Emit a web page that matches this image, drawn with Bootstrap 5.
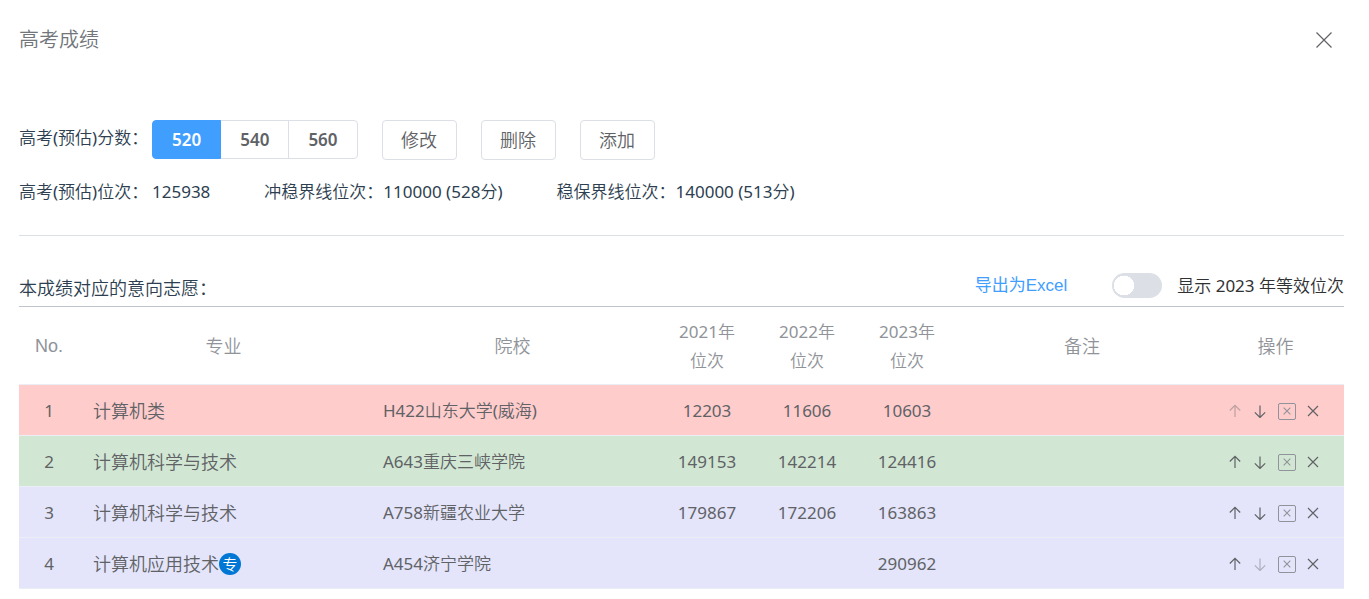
<!DOCTYPE html>
<html lang="zh-CN">
<head>
<meta charset="utf-8">
<meta name="viewport" content="width=device-width, initial-scale=1">
<title>高考成绩</title>
<link href="https://cdn.jsdelivr.net/npm/bootstrap@5.3.0/dist/css/bootstrap.min.css" rel="stylesheet">
<style>
  :root { --ink: #2c3e50; --text: #606266; --muted: #909399; --edge: #dcdfe6; --blue: #409eff; }
  body { font-family: "Noto Sans", "Noto Sans CJK SC DemiLight", "Noto Sans CJK SC", sans-serif; font-size: 17px; line-height: 26px; color: var(--ink); }
  .drawer { padding: 24px 25px 10px 19px; }
  .drawer-title { font-size: 20px; line-height: 32px; color: #72767b; font-weight: 350; }
  .icon-btn { display: inline-flex; align-items: center; justify-content: center; padding: 0; border: 0; background: none; color: var(--text); }
  .icon-btn:disabled { opacity: .4; }
  .icon-btn svg, .boxed svg { fill: none; stroke: currentColor; stroke-width: 1.2; display: block; }
  .score-row { margin-top: 64px; gap: 24px; }
  .row-label { width: 133px; white-space: nowrap; }
  .score-row .row-label { line-height: 36px; }
  .btn { --bs-btn-font-size: 18px; --bs-btn-font-weight: 350; --bs-btn-line-height: 26px; --bs-btn-padding-x: 18px; --bs-btn-padding-y: 6px; --bs-btn-border-radius: 4px;
         --bs-btn-color: var(--text); --bs-btn-bg: #fff; --bs-btn-border-color: var(--edge);
         --bs-btn-active-bg: var(--blue); --bs-btn-active-border-color: var(--blue); --bs-btn-active-color: #fff;
         --bs-btn-hover-color: var(--blue); --bs-btn-hover-border-color: var(--blue); min-width: 75px; }
  .score-group .btn { font-size: 17px; font-weight: 600; height: 39px; padding: 6px 19px; min-width: 0; }
  .rank-row { margin-top: 19px; gap: 54px; }
  .divider { margin: 30px 0 0; border-top: 1px solid var(--edge); opacity: 1; }
  .list-bar { padding: 32px 0 3px; border-bottom: 1px solid #c0c4cc; height: 71px; }
  .list-title { font-size: 18px; line-height: 26px; font-weight: 350; }
  .export-link { font-family: "Liberation Sans", "Noto Sans CJK SC", sans-serif; color: var(--blue); text-decoration: none; margin-right: 45px; }
  .switch-row { gap: 15px; min-height: 26px; }
  .form-switch .form-check-input { width: 50px; height: 25px; margin: 0; border: 0; background-color: var(--edge);
         background-image: radial-gradient(circle, #fff 10px, transparent 10px); background-size: 24px 25px; background-position: left center; }
  .form-switch .form-check-input:checked { background-color: var(--blue); background-position: right center; }
  .switch-row label { color: #303133; }
  .wish-table { table-layout: fixed; --bs-table-color: var(--text); --bs-table-bg: transparent; border-color: #ebeef5; }
  .wish-table > :not(caption) > * > * { padding: 2px 14px 0; height: 51px; vertical-align: middle; border-bottom: 1px solid #ebeef5; }
  .wish-table thead th { color: var(--muted); font-weight: 350; font-size: 18px; line-height: 29px; text-align: center; }
  .wish-table thead .year { font-size: 17px; font-weight: 400; }
  .wish-table thead .latin { font-family: "Liberation Sans", sans-serif; font-weight: 400; }
  .wish-table thead tr > * { height: 77px; }
  .major { font-size: 18px; font-weight: 350; }
  .wish-table tbody .school { padding-left: 15px; }
  .wish-table tbody .op-cell { padding: 3px 0 0 21px; }
  .ops { gap: 11px; }
  .c-no { width: 60px; } .c-year { width: 100px; } .c-note { width: 250px; } .c-ops { width: 137px; }
  .reach { background: #ffcccc; } .match { background: #d1e7d3; } .safe { background: #e4e5fa; }
  .tag { width: 22px; height: 22px; background: #0077d4; color: #fff; font-size: 15px; line-height: 22px; font-weight: 400; }
  .boxed { display: inline-flex; align-items: center; justify-content: center; width: 18px; height: 17px; padding: 0; border: 1px solid var(--muted); border-radius: 2px; background: none; color: var(--muted); }
  .boxed svg { stroke-width: 1.6; }
</style>
</head>
<body>
<svg class="d-none" aria-hidden="true">
  <symbol id="up" viewBox="0 0 14 14"><path d="M7 13V1.500M1.800 6.500 7 1.300l5.200 5.200"/></symbol>
  <symbol id="down" viewBox="0 0 14 14"><path d="M7 1.500v12M1.800 8.300 7 13.500l5.200-5.200"/></symbol>
  <symbol id="cross" viewBox="0 0 12 12"><path d="m1 1 10 10M11 1 1 11"/></symbol>
</svg>
<main class="drawer">
  <header class="d-flex justify-content-between align-items-center">
    <h1 class="drawer-title m-0">高考成绩</h1>
    <button type="button" class="icon-btn p-1 me-2" aria-label="关闭"><svg width="16" height="16" viewBox="0 0 16 16"><path d="m.5.5 15 15M15.500.500l-15 15"/></svg></button>
  </header>

  <section>
    <div class="score-row d-flex flex-wrap">
      <div class="d-flex">
        <span class="row-label" id="scoreLabel">高考(预估)分数：</span>
        <div class="btn-group score-group" role="group" aria-labelledby="scoreLabel">
          <input type="radio" class="btn-check" name="score" id="s520" checked><label class="btn" for="s520">520</label>
          <input type="radio" class="btn-check" name="score" id="s540"><label class="btn" for="s540">540</label>
          <input type="radio" class="btn-check" name="score" id="s560"><label class="btn" for="s560">560</label>
        </div>
      </div>
      <button type="button" class="btn">修改</button>
      <button type="button" class="btn">删除</button>
      <button type="button" class="btn">添加</button>
    </div>
    <div class="rank-row d-flex flex-wrap">
      <div class="d-flex"><span class="row-label">高考(预估)位次：</span><span>125938</span></div>
      <div>冲稳界线位次：110000 (528分)</div>
      <div>稳保界线位次：140000 (513分)</div>
    </div>
  </section>
  <hr class="divider">

  <section>
    <div class="list-bar d-flex align-items-center">
      <h2 class="list-title m-0 me-auto pt-1">本成绩对应的意向志愿：</h2>
      <a href="#" class="export-link">导出为Excel</a>
      <div class="form-check form-switch switch-row d-flex align-items-center p-0 m-0">
        <input class="form-check-input" type="checkbox" role="switch" id="equiv">
        <label class="form-check-label" for="equiv">显示 2023 年等效位次</label>
      </div>
    </div>
    <table class="table wish-table m-0">
      <colgroup><col class="c-no"><col><col><col class="c-year"><col class="c-year"><col class="c-year"><col class="c-note"><col class="c-ops"></colgroup>
      <thead>
        <tr><th class="latin px-0">No.</th><th>专业</th><th>院校</th><th class="year">2021年<br>位次</th><th class="year">2022年<br>位次</th><th class="year">2023年<br>位次</th><th>备注</th><th>操作</th></tr>
      </thead>
      <tbody>
        <tr class="reach"><td class="text-center">1</td><td class="major">计算机类</td><td class="school">H422山东大学(威海)</td><td class="text-center">12203</td><td class="text-center">11606</td><td class="text-center">10603</td><td></td>
          <td class="op-cell"><div class="d-flex align-items-center ops"><button type="button" class="icon-btn" aria-label="上移" disabled><svg width="14" height="14"><use href="#up"/></svg></button><button type="button" class="icon-btn" aria-label="下移"><svg width="14" height="14"><use href="#down"/></svg></button><button type="button" class="boxed" aria-label="清除"><svg width="8" height="8" viewBox="0 0 12 12"><use href="#cross"/></svg></button><button type="button" class="icon-btn" aria-label="删除"><svg width="12" height="12"><use href="#cross"/></svg></button></div></td></tr>
        <tr class="match"><td class="text-center">2</td><td class="major">计算机科学与技术</td><td class="school">A643重庆三峡学院</td><td class="text-center">149153</td><td class="text-center">142214</td><td class="text-center">124416</td><td></td>
          <td class="op-cell"><div class="d-flex align-items-center ops"><button type="button" class="icon-btn" aria-label="上移"><svg width="14" height="14"><use href="#up"/></svg></button><button type="button" class="icon-btn" aria-label="下移"><svg width="14" height="14"><use href="#down"/></svg></button><button type="button" class="boxed" aria-label="清除"><svg width="8" height="8" viewBox="0 0 12 12"><use href="#cross"/></svg></button><button type="button" class="icon-btn" aria-label="删除"><svg width="12" height="12"><use href="#cross"/></svg></button></div></td></tr>
        <tr class="safe"><td class="text-center">3</td><td class="major">计算机科学与技术</td><td class="school">A758新疆农业大学</td><td class="text-center">179867</td><td class="text-center">172206</td><td class="text-center">163863</td><td></td>
          <td class="op-cell"><div class="d-flex align-items-center ops"><button type="button" class="icon-btn" aria-label="上移"><svg width="14" height="14"><use href="#up"/></svg></button><button type="button" class="icon-btn" aria-label="下移"><svg width="14" height="14"><use href="#down"/></svg></button><button type="button" class="boxed" aria-label="清除"><svg width="8" height="8" viewBox="0 0 12 12"><use href="#cross"/></svg></button><button type="button" class="icon-btn" aria-label="删除"><svg width="12" height="12"><use href="#cross"/></svg></button></div></td></tr>
        <tr class="safe"><td class="text-center">4</td><td class="major"><div class="d-flex align-items-center">计算机应用技术<span class="tag rounded-circle text-center">专</span></div></td><td class="school">A454济宁学院</td><td></td><td></td><td class="text-center">290962</td><td></td>
          <td class="op-cell"><div class="d-flex align-items-center ops"><button type="button" class="icon-btn" aria-label="上移"><svg width="14" height="14"><use href="#up"/></svg></button><button type="button" class="icon-btn" aria-label="下移" disabled><svg width="14" height="14"><use href="#down"/></svg></button><button type="button" class="boxed" aria-label="清除"><svg width="8" height="8" viewBox="0 0 12 12"><use href="#cross"/></svg></button><button type="button" class="icon-btn" aria-label="删除"><svg width="12" height="12"><use href="#cross"/></svg></button></div></td></tr>
      </tbody>
    </table>
  </section>
</main>
<script src="https://cdn.jsdelivr.net/npm/bootstrap@5.3.0/dist/js/bootstrap.bundle.min.js"></script>
</body>
</html>
